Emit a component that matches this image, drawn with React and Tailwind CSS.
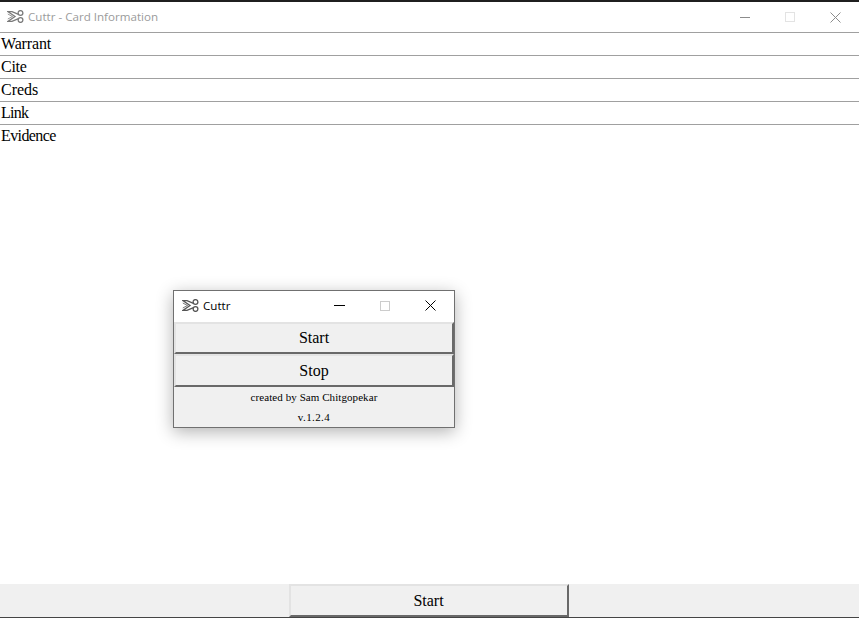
// Cuttr card information window with the small start/stop window floating over it
const serif = "font-['Liberation_Serif',serif]";
const ui = "font-['Open_Sans','Noto_Sans',sans-serif]";

const rows = [
  { label: "Warrant", tracking: "tracking-[-0.15px]" },
  { label: "Cite", tracking: "tracking-[-0.25px]" },
  { label: "Creds", tracking: "tracking-normal" },
  { label: "Link", tracking: "tracking-[-0.75px]" },
  { label: "Evidence", tracking: "tracking-[-0.6px]" },
];

function ScissorsIcon({ className }) {
  return (
    <svg viewBox="0 0 17 13" width="17" height="13" fill="none" stroke="currentColor" strokeWidth="1.3" className={className}>
      <circle cx="13.5" cy="3" r="2.4" />
      <circle cx="13.5" cy="10" r="2.4" />
      <path d="M11.5 4.3 L5 1.6 L0.8 1.6 L8 6.5 L0.8 11.4 L5 11.4 L11.5 8.7" />
      <path d="M0.8 4 L5.5 6.5 L0.8 9" strokeWidth="0.8" />
    </svg>
  );
}

function WindowControls({ active }) {
  const stroke = active ? "text-black" : "text-[#8c8c8c]";
  return (
    <div className="flex items-center">
      <div className="flex w-[46px] justify-center pl-px">
        <div className={active ? "h-px w-[11px] bg-black" : "h-px w-[10px] bg-[#8c8c8c]"} />
      </div>
      <div className="flex w-[46px] justify-center">
        <div className={active ? "size-[10px] border border-[#cccccc]" : "size-[10px] border border-[#e3e3e3]"} />
      </div>
      <div className="flex w-[46px] justify-center pr-px">
        <svg viewBox="0 0 11 11" width="11" height="11" stroke="currentColor" strokeWidth="1" className={stroke}>
          <path d="M0.5 0.5 L10.5 10.5 M10.5 0.5 L0.5 10.5" />
        </svg>
      </div>
    </div>
  );
}

function RaisedButton({ children, className }) {
  return (
    <button
      className={`border-2 border-t-[#e3e3e3] border-l-[#e3e3e3] border-r-[#696969] border-b-[#696969] bg-[#f0f0f0] text-[16px] text-black ${className}`}
    >
      {children}
    </button>
  );
}

export default function App() {
  return (
    <div className={`relative flex h-[618px] w-[859px] flex-col overflow-hidden border-t-2 border-[#1f1f1f] bg-white ${serif}`}>
      <div className="flex h-[30px] shrink-0 items-center justify-between">
        <div className="flex items-center pl-[7px]">
          <ScissorsIcon className="text-[#7a7a7a]" />
          <span className={`ml-[4px] text-[11.6px] text-[#9b9b9b] ${ui}`}>Cuttr - Card Information</span>
        </div>
        <WindowControls />
      </div>

      <div className="flex-1">
        {rows.map((row) => (
          <div key={row.label} className={`h-[23px] border-t border-[#a0a0a0] pl-px text-[16px] leading-[22px] text-black ${row.tracking}`}>
            {row.label}
          </div>
        ))}
      </div>

      <div className="flex h-[34px] shrink-0 justify-center border-b border-[#444444] bg-[#f0f0f0] pr-[2px]">
        <RaisedButton className="h-[33px] w-[280px]">Start</RaisedButton>
      </div>

      <div className="absolute left-[173px] top-[288px] flex h-[138px] w-[282px] flex-col border border-[#707070] bg-[#f0f0f0] shadow-[0_4px_16px_rgba(0,0,0,0.3)]">
        <div className="flex h-[31px] shrink-0 items-center justify-between bg-white pb-[2px]">
          <div className="flex items-center pl-[8px]">
            <ScissorsIcon className="text-[#555555]" />
            <span className={`ml-[4px] text-[11.6px] text-black ${ui}`}>Cuttr</span>
          </div>
          <WindowControls active />
        </div>
        <RaisedButton className="h-[32px] w-full">Start</RaisedButton>
        <RaisedButton className="h-[33px] w-full">Stop</RaisedButton>
        <div className="flex flex-1 flex-col items-center text-[11px] text-black">
          <span className="mt-[4px] leading-[13px] tracking-[0.07px]">created by Sam Chitgopekar</span>
          <span className="mt-[7px] leading-[13px] tracking-[0.4px]">v.1.2.4</span>
        </div>
      </div>
    </div>
  );
}
